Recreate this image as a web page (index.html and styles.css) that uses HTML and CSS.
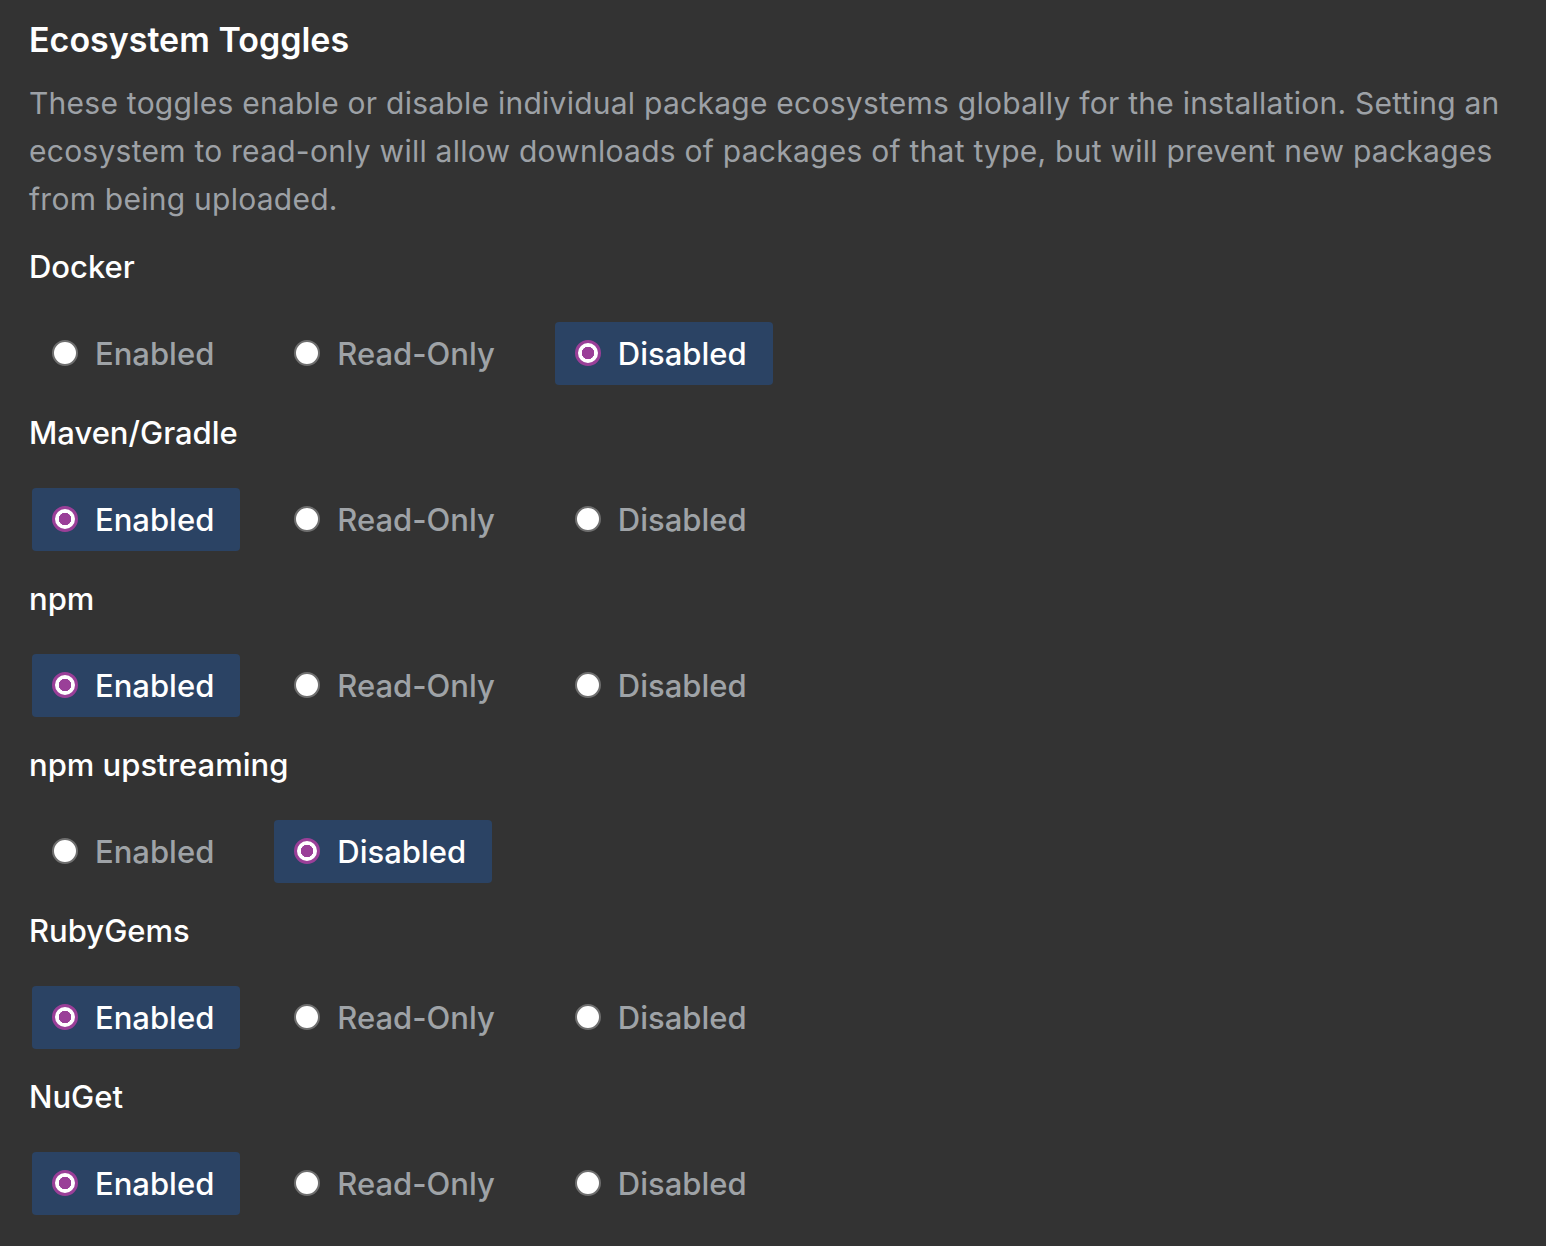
FILE: index.html
```html
<!DOCTYPE html>
<html lang="en">
<head>
<meta charset="utf-8">
<title>Ecosystem Toggles</title>
<link rel="stylesheet" href="styles.css">
</head>
<body>
<main class="panel">
  <h1 class="title">Ecosystem Toggles</h1>
  <p class="desc">These toggles enable or disable individual package ecosystems globally for the installation. Setting an ecosystem to read-only will allow downloads of packages of that type, but will prevent new packages from being uploaded.</p>

  <section class="group">
    <h2 class="label">Docker</h2>
    <div class="options">
      <label class="opt"><span class="radio"></span><span class="txt">Enabled</span></label>
      <label class="opt"><span class="radio"></span><span class="txt">Read-Only</span></label>
      <label class="opt on"><span class="radio"></span><span class="txt">Disabled</span></label>
    </div>
  </section>

  <section class="group">
    <h2 class="label">Maven/Gradle</h2>
    <div class="options">
      <label class="opt on"><span class="radio"></span><span class="txt">Enabled</span></label>
      <label class="opt"><span class="radio"></span><span class="txt">Read-Only</span></label>
      <label class="opt"><span class="radio"></span><span class="txt">Disabled</span></label>
    </div>
  </section>

  <section class="group">
    <h2 class="label">npm</h2>
    <div class="options">
      <label class="opt on"><span class="radio"></span><span class="txt">Enabled</span></label>
      <label class="opt"><span class="radio"></span><span class="txt">Read-Only</span></label>
      <label class="opt"><span class="radio"></span><span class="txt">Disabled</span></label>
    </div>
  </section>

  <section class="group">
    <h2 class="label">npm upstreaming</h2>
    <div class="options">
      <label class="opt"><span class="radio"></span><span class="txt">Enabled</span></label>
      <label class="opt on"><span class="radio"></span><span class="txt">Disabled</span></label>
    </div>
  </section>

  <section class="group">
    <h2 class="label">RubyGems</h2>
    <div class="options">
      <label class="opt on"><span class="radio"></span><span class="txt">Enabled</span></label>
      <label class="opt"><span class="radio"></span><span class="txt">Read-Only</span></label>
      <label class="opt"><span class="radio"></span><span class="txt">Disabled</span></label>
    </div>
  </section>

  <section class="group">
    <h2 class="label">NuGet</h2>
    <div class="options">
      <label class="opt on"><span class="radio"></span><span class="txt">Enabled</span></label>
      <label class="opt"><span class="radio"></span><span class="txt">Read-Only</span></label>
      <label class="opt"><span class="radio"></span><span class="txt">Disabled</span></label>
    </div>
  </section>
</main>
</body>
</html>
```

FILE: styles.css
```css
html, body {
  margin: 0;
  padding: 0;
  background: #333333;
}
body {
  font-family: Inter, "Noto Sans", "Liberation Sans", sans-serif;
  color: #ffffff;
}
.panel {
  padding: 16px 30px 0 29px;
}
.title {
  margin: 0;
  font-size: 34px;
  line-height: 48px;
  font-weight: 600;
  letter-spacing: 0;
  color: #ffffff;
}
.desc {
  margin: 15px 0 20px 0;
  font-size: 30px;
  line-height: 48px;
  font-weight: 400;
  letter-spacing: 0.25px;
  color: #9da1a6;
}
.group {
  margin: 0 0 24px 0;
}
.label {
  margin: 0 0 31px 0;
  font-size: 31px;
  line-height: 48px;
  font-weight: 500;
  color: #ffffff;
}
.options {
  display: flex;
  gap: 34px;
  padding-left: 3px;
}
.opt {
  display: inline-flex;
  align-items: center;
  height: 63px;
  padding: 0 26px 0 20px;
  gap: 17px;
  border-radius: 4px;
  font-size: 31px;
  font-weight: 500;
  color: #9fa3a7;
}
.opt.on {
  background: #2b4364;
  color: #ffffff;
}
.radio {
  box-sizing: border-box;
  width: 26px;
  height: 26px;
  margin-top: -2px;
  border-radius: 50%;
  background: #ffffff;
  border: 2px solid #6e6e6e;
  flex: none;
}
.opt.on .radio {
  border: 3px solid #9a3f98;
  background: radial-gradient(circle closest-side, #9a3f98 0 6px, #ffffff 6.5px);
}
```
